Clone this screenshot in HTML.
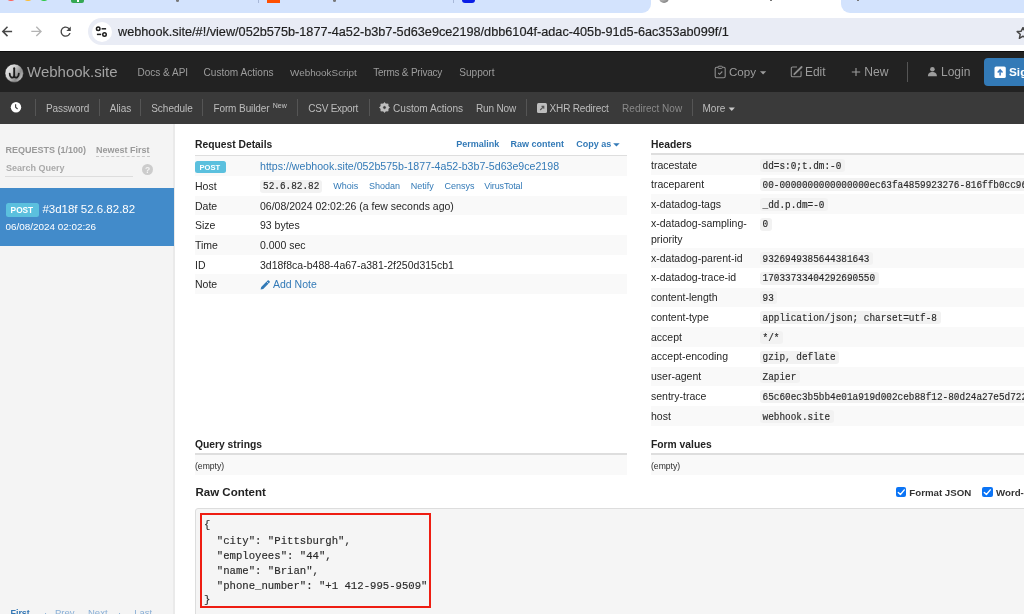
<!DOCTYPE html><html><head><meta charset="utf-8"><title>Webhook.site</title><style>
*{box-sizing:border-box;margin:0;padding:0}
html,body{width:1024px;height:614px;overflow:hidden;background:#fff;font-family:"Liberation Sans",sans-serif;position:relative;color:#333}
.a{position:absolute;white-space:nowrap}
.bx{position:absolute}
.nv{font-size:10px;color:#9d9d9d;line-height:12px}
.nr{font-size:11.6px;color:#9d9d9d;line-height:14px}
.tb{font-size:10px;color:#bdbdbd;line-height:12px}
.sep{position:absolute;width:1px;background:#555}
.lab{font-size:10.5px;color:#262626;line-height:14px}
.lnk{color:#337ab7}
.code{position:absolute;background:#f2f2f2;border-radius:3px;height:13.5px}
.ct{font-family:"Liberation Mono",monospace;font-size:9.4px;color:#2a2a2a;line-height:12px;transform:scaleY(1.18);transform-origin:0 9px;-webkit-text-stroke:0.15px #2a2a2a}
.hd{font-size:10.3px;font-weight:bold;color:#222;line-height:13px}
</style></head><body><div id="root" style="will-change:transform;position:absolute;left:0;top:0;width:1024px;height:614px;overflow:hidden">
<div class="bx" style="left:0;top:0;width:1024px;height:51px;background:#fff"></div>
<div class="bx" style="left:88px;top:17.8px;width:960px;height:27.4px;border-radius:14px;background:#e9ecf5"></div>
<div class="bx" style="left:91.5px;top:21.5px;width:20px;height:20px;border-radius:50%;background:#fff"></div>
<div class="a" style="left:118px;top:24px;font-size:12.7px;color:#1f1f1f;line-height:16px;-webkit-text-stroke:0.2px #1f1f1f">webhook.site/#!/view/052b575b-1877-4a52-b3b7-5d63e9ce2198/dbb6104f-adac-405b-91d5-6ac353ab099f/1</div>
<div class="bx" style="left:0;top:51px;width:1024px;height:41px;background:#222;border-top:1px solid #0c0c0c"></div>
<div class="a" style="left:27px;top:63.4px;font-size:15px;color:#a3a3a3;line-height:18px">Webhook.site</div>
<div class="a nv" style="left:137.5px;top:67px;font-size:10px;">Docs &amp; API</div>
<div class="a nv" style="left:203.5px;top:67px;font-size:10.1px;">Custom Actions</div>
<div class="a nv" style="left:290px;top:67px;font-size:9.9px;">WebhookScript</div>
<div class="a nv" style="left:373.2px;top:67px;font-size:10px;letter-spacing:-0.22px">Terms &amp; Privacy</div>
<div class="a nv" style="left:459.2px;top:67px;font-size:10.1px;">Support</div>
<div class="a nr" style="left:729px;top:65.00px;font-size:11.6px">Copy</div>
<div class="a nr" style="left:805px;top:64.75px;font-size:11.95px">Edit</div>
<div class="a nr" style="left:864.3px;top:64.65px;font-size:12.1px">New</div>
<div class="a nr" style="left:941px;top:64.72px;font-size:12px">Login</div>
<div class="sep" style="left:907px;top:62px;height:20px;background:#555"></div>
<div class="bx" style="left:984px;top:58px;width:60px;height:27.5px;border-radius:4px;background:#337ab7"></div>
<div class="a" style="left:1009px;top:65px;font-size:11.8px;font-weight:bold;color:#fff;line-height:14px">Sign up</div>
<div class="bx" style="left:0;top:92px;width:1024px;height:32px;background:#3a3a3a"></div>
<div class="sep" style="left:35.0px;top:99px;height:16.5px"></div>
<div class="sep" style="left:99.1px;top:99px;height:16.5px"></div>
<div class="sep" style="left:140.1px;top:99px;height:16.5px"></div>
<div class="sep" style="left:202.3px;top:99px;height:16.5px"></div>
<div class="sep" style="left:297.0px;top:99px;height:16.5px"></div>
<div class="sep" style="left:368.9px;top:99px;height:16.5px"></div>
<div class="sep" style="left:526.3px;top:99px;height:16.5px"></div>
<div class="sep" style="left:691.8px;top:99px;height:16.5px"></div>
<div class="a tb" style="left:45.9px;top:102.7px;letter-spacing:-0.08px">Password</div>
<div class="a tb" style="left:109.8px;top:102.7px;letter-spacing:-0.05px">Alias</div>
<div class="a tb" style="left:151.2px;top:102.7px;">Schedule</div>
<div class="a tb" style="left:213.4px;top:102.7px;letter-spacing:-0.09px">Form Builder</div>
<div class="a tb" style="left:308.3px;top:102.7px;letter-spacing:-0.25px">CSV Export</div>
<div class="a tb" style="left:393px;top:102.7px;font-size:10.1px">Custom Actions</div>
<div class="a tb" style="left:476px;top:102.7px;letter-spacing:-0.17px">Run Now</div>
<div class="a tb" style="left:549.6px;top:102.7px;letter-spacing:-0.18px">XHR Redirect</div>
<div class="a tb" style="left:622.1px;top:102.7px;color:#8a8a8a">Redirect Now</div>
<div class="a tb" style="left:702.5px;top:102.7px;">More</div>
<div class="a" style="left:272.7px;top:100.8px;font-size:7px;color:#c8c8c8;line-height:9px">New</div>
<div class="bx" style="left:0;top:124px;width:175px;height:490px;background:#f4f4f4;border-right:2px solid #eaeaea"></div>
<div class="a" style="left:5.5px;top:145px;font-size:9px;font-weight:bold;color:#999;line-height:10px">REQUESTS (1/100)</div>
<div class="a" style="left:96px;top:145px;font-size:9px;font-weight:bold;color:#999;line-height:10px">Newest First</div>
<div class="bx" style="left:96px;top:156px;width:54px;height:0;border-top:1px dashed #c8c8c8"></div>
<div class="a" style="left:6px;top:163px;font-size:9px;font-weight:bold;color:#aaa;line-height:10px">Search Query</div>
<div class="bx" style="left:5px;top:176px;width:128px;height:1px;background:#ddd"></div>
<div class="bx" style="left:141.8px;top:164.1px;width:11.2px;height:11.2px;border-radius:50%;background:#ccc"></div>
<div class="a" style="left:144.5px;top:165px;width:6px;text-align:center;font-size:8.5px;font-weight:bold;color:#f4f4f4;line-height:10px">?</div>
<div class="bx" style="left:0;top:188px;width:173.5px;height:57.5px;background:#428bca"></div>
<div class="bx" style="left:5.5px;top:203px;width:33.5px;height:14.3px;border-radius:2.5px;background:#5bc0de"></div>
<div class="a" style="left:10.6px;top:205px;font-size:8.3px;font-weight:bold;color:#fff;line-height:10px">POST</div>
<div class="a" style="left:42.4px;top:203px;font-size:11.5px;color:#fff;line-height:13px">#3d18f 52.6.82.82</div>
<div class="a" style="left:5.5px;top:221px;font-size:9.9px;color:#fff;line-height:11px">06/08/2024 02:02:26</div>
<div class="a" style="left:10.5px;top:607.6px;font-size:8.9px;font-weight:bold;color:#3377b5;line-height:11px">First</div>
<div class="a" style="left:44px;top:606.5px;font-size:9.5px;color:#89afd6;line-height:11px">&middot;</div>
<div class="a" style="left:55px;top:606.5px;font-size:9.5px;color:#89afd6;line-height:11px">Prev</div>
<div class="a" style="left:88px;top:606.5px;font-size:9.5px;color:#89afd6;line-height:11px">Next</div>
<div class="a" style="left:118px;top:606.5px;font-size:9.5px;color:#89afd6;line-height:11px">&middot;</div>
<div class="a" style="left:134.2px;top:606.5px;font-size:9.5px;color:#89afd6;line-height:11px">Last</div>
<div class="a hd" style="left:195px;top:138px">Request Details</div>
<div class="a lnk" style="left:456.2px;top:139px;font-size:9px;font-weight:bold;line-height:11px">Permalink</div>
<div class="a lnk" style="left:510.6px;top:139px;font-size:9px;font-weight:bold;line-height:11px">Raw content</div>
<div class="a lnk" style="left:576.2px;top:139px;font-size:9px;font-weight:bold;line-height:11px">Copy as</div>
<div class="bx" style="left:195px;top:154.5px;width:432px;height:2px;background:#dedede"></div>
<div class="bx" style="left:195px;top:156.30px;width:432px;height:19.65px;background:#f9f9f9"></div>
<div class="a lab" style="left:195px;top:178.95px">Host</div>
<div class="bx" style="left:195px;top:195.60px;width:432px;height:19.65px;background:#f9f9f9"></div>
<div class="a lab" style="left:195px;top:198.60px">Date</div>
<div class="a lab" style="left:195px;top:218.25px">Size</div>
<div class="bx" style="left:195px;top:234.90px;width:432px;height:19.65px;background:#f9f9f9"></div>
<div class="a lab" style="left:195px;top:237.90px">Time</div>
<div class="a lab" style="left:195px;top:257.55px">ID</div>
<div class="bx" style="left:195px;top:274.20px;width:432px;height:19.65px;background:#f9f9f9"></div>
<div class="a lab" style="left:195px;top:277.20px">Note</div>
<div class="bx" style="left:195px;top:161px;width:30.5px;height:12.4px;border-radius:2.5px;background:#5bc0de"></div>
<div class="a" style="left:199.5px;top:162.5px;font-size:7.6px;font-weight:bold;color:#fff;line-height:10px">POST</div>
<div class="a lab lnk" style="left:260px;top:159.20px;font-size:10.61px">https://webhook.site/052b575b-1877-4a52-b3b7-5d63e9ce2198</div>
<div class="code" style="left:260px;top:179.7px;width:62.2px"></div>
<div class="a ct" style="left:263px;top:181.2px">52.6.82.82</div>
<div class="a lnk" style="left:333.3px;top:179.95px;font-size:9px;line-height:12px">Whois</div>
<div class="a lnk" style="left:369px;top:179.95px;font-size:9px;line-height:12px">Shodan</div>
<div class="a lnk" style="left:410.7px;top:179.95px;font-size:9px;line-height:12px">Netify</div>
<div class="a lnk" style="left:444.6px;top:179.95px;font-size:9px;line-height:12px">Censys</div>
<div class="a lnk" style="left:484.3px;top:179.95px;font-size:9px;letter-spacing:-0.14px;line-height:12px">VirusTotal</div>
<div class="a lab" style="left:260px;top:198.60px">06/08/2024 02:02:26 (a few seconds ago)</div>
<div class="a lab" style="left:260px;top:218.25px">93 bytes</div>
<div class="a lab" style="left:260px;top:237.90px">0.000 sec</div>
<div class="a lab" style="left:260px;top:257.55px">3d18f8ca-b488-4a67-a381-2f250d315cb1</div>
<div class="a lab lnk" style="left:273px;top:277.20px">Add Note</div>
<div class="a hd" style="left:651px;top:138px">Headers</div>
<div class="bx" style="left:651px;top:153px;width:400px;height:2px;background:#dedede"></div>
<div class="bx" style="left:651px;top:155.00px;width:400px;height:19.65px;background:#f9f9f9"></div>
<div class="a lab" style="left:651px;top:157.50px;line-height:15.3px">tracestate</div>
<div class="code" style="left:759.5px;top:158.60px;width:85.5px;height:13px"></div>
<div class="a ct" style="left:762.6px;top:160.50px">dd=s:0;t.dm:-0</div>
<div class="a lab" style="left:651px;top:177.15px;line-height:15.3px">traceparent</div>
<div class="code" style="left:759.5px;top:178.25px;width:271.6px;height:13px"></div>
<div class="a ct" style="left:762.6px;top:180.15px">00-0000000000000000ec63fa4859923276-816ffb0cc96</div>
<div class="bx" style="left:651px;top:194.30px;width:400px;height:19.65px;background:#f9f9f9"></div>
<div class="a lab" style="left:651px;top:196.80px;line-height:15.3px">x-datadog-tags</div>
<div class="code" style="left:759.5px;top:197.90px;width:68.5px;height:13px"></div>
<div class="a ct" style="left:762.6px;top:199.80px">_dd.p.dm=-0</div>
<div class="a lab" style="left:651px;top:216.45px;line-height:15.3px">x-datadog-sampling-<br>priority</div>
<div class="code" style="left:759.5px;top:217.55px;width:12.1px;height:13px"></div>
<div class="a ct" style="left:762.6px;top:219.45px">0</div>
<div class="bx" style="left:651px;top:248.15px;width:400px;height:19.75px;background:#f9f9f9"></div>
<div class="a lab" style="left:651px;top:250.65px;line-height:15.3px">x-datadog-parent-id</div>
<div class="code" style="left:759.5px;top:251.75px;width:113.7px;height:13px"></div>
<div class="a ct" style="left:762.6px;top:253.65px">9326949385644381643</div>
<div class="a lab" style="left:651px;top:270.40px;line-height:15.3px">x-datadog-trace-id</div>
<div class="code" style="left:759.5px;top:271.50px;width:119.3px;height:13px"></div>
<div class="a ct" style="left:762.6px;top:273.40px">17033733404292690550</div>
<div class="bx" style="left:651px;top:287.65px;width:400px;height:19.75px;background:#f9f9f9"></div>
<div class="a lab" style="left:651px;top:290.15px;line-height:15.3px">content-length</div>
<div class="code" style="left:759.5px;top:291.25px;width:17.8px;height:13px"></div>
<div class="a ct" style="left:762.6px;top:293.15px">93</div>
<div class="a lab" style="left:651px;top:309.90px;line-height:15.3px">content-type</div>
<div class="code" style="left:759.5px;top:311.00px;width:181.3px;height:13px"></div>
<div class="a ct" style="left:762.6px;top:312.90px">application/json; charset=utf-8</div>
<div class="bx" style="left:651px;top:327.15px;width:400px;height:19.75px;background:#f9f9f9"></div>
<div class="a lab" style="left:651px;top:329.65px;line-height:15.3px">accept</div>
<div class="code" style="left:759.5px;top:330.75px;width:23.4px;height:13px"></div>
<div class="a ct" style="left:762.6px;top:332.65px">*/*</div>
<div class="a lab" style="left:651px;top:349.40px;line-height:15.3px">accept-encoding</div>
<div class="code" style="left:759.5px;top:350.50px;width:79.8px;height:13px"></div>
<div class="a ct" style="left:762.6px;top:352.40px">gzip, deflate</div>
<div class="bx" style="left:651px;top:366.65px;width:400px;height:19.75px;background:#f9f9f9"></div>
<div class="a lab" style="left:651px;top:369.15px;line-height:15.3px">user-agent</div>
<div class="code" style="left:759.5px;top:370.25px;width:40.3px;height:13px"></div>
<div class="a ct" style="left:762.6px;top:372.15px">Zapier</div>
<div class="a lab" style="left:651px;top:388.90px;line-height:15.3px">sentry-trace</div>
<div class="code" style="left:759.5px;top:390.00px;width:271.6px;height:13px"></div>
<div class="a ct" style="left:762.6px;top:391.90px">65c60ec3b5bb4e01a919d002ceb88f12-80d24a27e5d722</div>
<div class="bx" style="left:651px;top:406.15px;width:400px;height:19.75px;background:#f9f9f9"></div>
<div class="a lab" style="left:651px;top:408.65px;line-height:15.3px">host</div>
<div class="code" style="left:759.5px;top:409.75px;width:74.2px;height:13px"></div>
<div class="a ct" style="left:762.6px;top:411.65px">webhook.site</div>
<div class="a hd" style="left:195px;top:437.5px">Query strings</div>
<div class="bx" style="left:195px;top:453px;width:432px;height:2px;background:#dedede"></div>
<div class="bx" style="left:195px;top:455px;width:432px;height:19.6px;background:#f9f9f9"></div>
<div class="a" style="left:195px;top:460.7px;font-size:8.6px;color:#2a2a2a;line-height:11px">(empty)</div>
<div class="a hd" style="left:651px;top:437.5px">Form values</div>
<div class="bx" style="left:651px;top:453px;width:400px;height:2px;background:#dedede"></div>
<div class="bx" style="left:651px;top:455px;width:400px;height:19.6px;background:#f9f9f9"></div>
<div class="a" style="left:651px;top:460.7px;font-size:8.6px;color:#2a2a2a;line-height:11px">(empty)</div>
<div class="a" style="left:195.5px;top:484.5px;font-size:11.5px;font-weight:bold;color:#222;line-height:14px">Raw Content</div>
<div class="bx" style="left:895.5px;top:486.5px;width:10.5px;height:10.5px;border-radius:2px;background:#0b74f5"></div>
<div class="a" style="left:909.3px;top:487px;font-size:9.7px;font-weight:bold;color:#333;line-height:12px">Format JSON</div>
<div class="bx" style="left:982.4px;top:486.5px;width:10.5px;height:10.5px;border-radius:2px;background:#0b74f5"></div>
<div class="a" style="left:996px;top:487px;font-size:9.7px;font-weight:bold;color:#333;line-height:12px">Word-</div>
<div class="bx" style="left:195px;top:507.5px;width:900px;height:120px;background:#f5f5f5;border:1px solid #ddd;border-radius:3px"></div>
<div class="bx" style="left:200.2px;top:512.5px;width:231px;height:95.5px;border:2px solid #ee1d12"></div>
<div class="a" style="left:204px;top:518.30px;font-family:'Liberation Mono',monospace;font-size:10.65px;color:#2a2a2a;line-height:15px;transform:scaleY(1.1);transform-origin:0 11px;-webkit-text-stroke:0.15px #2a2a2a">{</div>
<div class="a" style="left:204px;top:533.50px;font-family:'Liberation Mono',monospace;font-size:10.65px;color:#2a2a2a;line-height:15px;transform:scaleY(1.1);transform-origin:0 11px;-webkit-text-stroke:0.15px #2a2a2a">&nbsp;&nbsp;&quot;city&quot;:&nbsp;&quot;Pittsburgh&quot;,</div>
<div class="a" style="left:204px;top:548.70px;font-family:'Liberation Mono',monospace;font-size:10.65px;color:#2a2a2a;line-height:15px;transform:scaleY(1.1);transform-origin:0 11px;-webkit-text-stroke:0.15px #2a2a2a">&nbsp;&nbsp;&quot;employees&quot;:&nbsp;&quot;44&quot;,</div>
<div class="a" style="left:204px;top:563.90px;font-family:'Liberation Mono',monospace;font-size:10.65px;color:#2a2a2a;line-height:15px;transform:scaleY(1.1);transform-origin:0 11px;-webkit-text-stroke:0.15px #2a2a2a">&nbsp;&nbsp;&quot;name&quot;:&nbsp;&quot;Brian&quot;,</div>
<div class="a" style="left:204px;top:579.10px;font-family:'Liberation Mono',monospace;font-size:10.65px;color:#2a2a2a;line-height:15px;transform:scaleY(1.1);transform-origin:0 11px;-webkit-text-stroke:0.15px #2a2a2a">&nbsp;&nbsp;&quot;phone_number&quot;:&nbsp;&quot;+1&nbsp;412-995-9509&quot;</div>
<div class="a" style="left:204px;top:593.10px;font-family:'Liberation Mono',monospace;font-size:10.65px;color:#2a2a2a;line-height:15px;transform:scaleY(1.1);transform-origin:0 11px;-webkit-text-stroke:0.15px #2a2a2a">}</div>
<div class="bx" style="left:0;top:0;width:651px;height:12.5px;background:#d3e3fd;border-bottom-right-radius:9px"></div>
<div class="bx" style="left:841px;top:0;width:183px;height:12.5px;background:#d3e3fd;border-bottom-left-radius:9px"></div>
<div class="bx" style="left:5px;top:-11px;width:12px;height:12px;border-radius:50%;background:#ff5f57"></div>
<div class="bx" style="left:21.5px;top:-11px;width:12px;height:12px;border-radius:50%;background:#febc2e"></div>
<div class="bx" style="left:38px;top:-11px;width:12px;height:12px;border-radius:50%;background:#28c840"></div>
<div class="bx" style="left:71px;top:-6px;width:13px;height:9px;border-radius:2px;background:#34a853"></div>
<div class="bx" style="left:76.5px;top:0;width:2px;height:2px;background:#fff"></div>
<div class="bx" style="left:176px;top:-1px;width:3px;height:2.5px;border-radius:50%;background:#777"></div>
<div class="bx" style="left:257.5px;top:0;width:1px;height:3px;background:#a8b8d8"></div>
<div class="bx" style="left:266.6px;top:-6px;width:13px;height:8.7px;background:#ff4f00"></div>
<div class="bx" style="left:333px;top:-1px;width:3px;height:2.5px;border-radius:50%;background:#777"></div>
<div class="bx" style="left:452.5px;top:0;width:1px;height:3px;background:#a8b8d8"></div>
<div class="bx" style="left:462px;top:-6px;width:13px;height:8.8px;border-radius:3px;background:#0a1ee6"></div>
<div class="bx" style="left:658.5px;top:-8px;width:10.5px;height:10.7px;border-radius:50%;background:radial-gradient(circle at 30% 30%,#eee,#666)"></div>
<div class="bx" style="left:770px;top:-1px;width:2px;height:2px;background:#777"></div>
<div class="bx" style="left:857px;top:-1px;width:2px;height:2px;background:#777"></div>
<svg class="bx" style="left:1016px;top:27px" width="14" height="12" viewBox="0 0 14 12"><path d="M7 0.5 L8.8 4.2 L12.8 4.6 L9.8 7.3 L10.6 11.3 L7 9.2 L3.4 11.3 L4.2 7.3 L1.2 4.6 L5.2 4.2 Z" fill="none" stroke="#474747" stroke-width="1.5" stroke-linejoin="round"/></svg>
<svg class="bx" style="left:58.4px;top:23.7px" width="16" height="16" viewBox="0 0 25 25"><path d="M17.65 6.35A7.958 7.958 0 0 0 12 4c-4.42 0-7.99 3.58-7.99 8s3.57 8 7.99 8c3.730 0 6.84-2.55 7.73-6h-2.08A5.99 5.99 0 0 1 12 18c-3.31 0-6-2.69-6-6s2.69-6 6-6c1.66 0 3.14.69 4.22 1.78L13 11h7V4l-2.35 2.35z" fill="#474747"/></svg>
<svg class="bx" style="left:0;top:24px" width="80" height="15" viewBox="0 0 80 15"><path d="M3 7.4 H12.1 M7.5 2.7 L2.8 7.4 L7.5 12.1" fill="none" stroke="#474747" stroke-width="1.5"/><path d="M31.3 7.4 H40.8 M36.3 2.7 L41 7.4 L36.3 12.1" fill="none" stroke="#b4b4b4" stroke-width="1.4"/></svg>
<svg class="bx" style="left:94px;top:24px" width="16" height="16" viewBox="0 0 16 16"><circle cx="4.2" cy="4.8" r="1.75" fill="none" stroke="#1f1f1f" stroke-width="1.5"/><path d="M7.6 4.8 H12.1" stroke="#1f1f1f" stroke-width="1.5"/><circle cx="10.5" cy="10.4" r="1.75" fill="none" stroke="#1f1f1f" stroke-width="1.5"/><path d="M2.9 10.4 H7.2" stroke="#1f1f1f" stroke-width="1.5"/></svg>
<svg class="bx" style="left:4px;top:63px" width="21" height="21" viewBox="0 0 21 21"><defs><linearGradient id="lg" x1="0" y1="0" x2="1" y2="0.6"><stop offset="0" stop-color="#f2f2f2"/><stop offset="0.45" stop-color="#d0d0d0"/><stop offset="0.8" stop-color="#8e8e8e"/><stop offset="1" stop-color="#bdbdbd"/></linearGradient></defs><circle cx="10.2" cy="10.2" r="9.2" fill="url(#lg)" stroke="#151515" stroke-width="0.5"/><path d="M10.2 5.2 V13.6" fill="none" stroke="#1c1c1c" stroke-width="1.9" stroke-linecap="round"/><path d="M5.7 10.6 C5.5 14.8 8.6 15.3 10.2 13.6 C11.8 15.3 14.9 14.8 14.8 10.6" fill="none" stroke="#1c1c1c" stroke-width="1.8" stroke-linecap="round"/></svg>
<svg class="bx" style="left:714px;top:65px" width="13" height="14" viewBox="0 0 13 14"><rect x="1.2" y="2.2" width="10" height="10.6" rx="1.5" fill="none" stroke="#8f8f8f" stroke-width="1.1"/><rect x="4" y="1.2" width="4.4" height="2.2" rx="1" fill="#222" stroke="#8f8f8f" stroke-width="1"/><path d="M4.2 8 L5.6 9.3 L8.3 6.5" fill="none" stroke="#8f8f8f" stroke-width="1.1"/></svg>
<svg class="bx" style="left:759px;top:70px" width="8" height="5" viewBox="0 0 8 5"><path d="M1 1.2 H7.2 L4.1 4.6 Z" fill="#9d9d9d"/></svg>
<svg class="bx" style="left:790px;top:65px" width="14" height="13" viewBox="0 0 14 13"><path d="M7 2 H2.6 A1.3 1.3 0 0 0 1.3 3.3 V10.5 A1.3 1.3 0 0 0 2.6 11.8 H9.8 A1.3 1.3 0 0 0 11.1 10.5 V6.2" fill="none" stroke="#8f8f8f" stroke-width="1.1"/><path d="M4.3 9.2 L11.6 2" stroke="#8f8f8f" stroke-width="1.8" stroke-linecap="round"/></svg>
<svg class="bx" style="left:851px;top:67px" width="10" height="10" viewBox="0 0 10 10"><path d="M5 0.9 V9.1 M0.8 5 H9.2" stroke="#9d9d9d" stroke-width="1.1"/></svg>
<svg class="bx" style="left:927px;top:66px" width="11" height="11" viewBox="0 0 11 11"><circle cx="5.4" cy="3.2" r="2.3" fill="#9d9d9d"/><path d="M0.9 10.3 C0.9 7 3 6 5.4 6 C7.8 6 9.9 7 9.9 10.3 Z" fill="#9d9d9d"/></svg>
<svg class="bx" style="left:994px;top:65.5px" width="12.5" height="12.5" viewBox="0 0 12.5 12.5"><rect x="0.5" y="0.5" width="11.3" height="11.5" rx="1.6" fill="#fff"/><path d="M6.1 9.6 V4.2 M3.7 6.4 L6.1 3.8 L8.5 6.4" fill="none" stroke="#3a7bbf" stroke-width="1.5"/></svg>
<svg class="bx" style="left:10px;top:100.5px" width="12" height="12" viewBox="0 0 12 12"><circle cx="6" cy="6.2" r="5.2" fill="#fff"/><path d="M5.6 3.2 V6.3 L7.6 8" fill="none" stroke="#444" stroke-width="1.2"/></svg>
<svg class="bx" style="left:379.2px;top:102px" width="11" height="11" viewBox="0 0 11 11"><path fill-rule="evenodd" d="M5.50,0.40 L6.99,1.90 L9.11,1.89 L9.10,4.01 L10.60,5.50 L9.10,6.99 L9.11,9.11 L6.99,9.10 L5.50,10.60 L4.01,9.10 L1.89,9.11 L1.90,6.99 L0.40,5.50 L1.90,4.01 L1.89,1.89 L4.01,1.90 Z M7.2 5.5 A1.7 1.7 0 1 0 3.8 5.5 A1.7 1.7 0 1 0 7.2 5.5 Z" fill="#bdbdbd" stroke="#bdbdbd" stroke-width="0.6" stroke-linejoin="round"/></svg>
<svg class="bx" style="left:537px;top:102.7px" width="10" height="10" viewBox="0 0 10 10"><rect x="0" y="0" width="10" height="10" rx="1.5" fill="#bdbdbd"/><path d="M3.2 7 L6.6 3.6 M4.5 3.4 H6.8 V5.7" fill="none" stroke="#555" stroke-width="1.1"/></svg>
<svg class="bx" style="left:727.5px;top:106.5px" width="8" height="5" viewBox="0 0 8 5"><path d="M0.6 0.6 H6.9 L3.75 4 Z" fill="#c8c8c8"/></svg>
<svg class="bx" style="left:613.3px;top:143.4px" width="8" height="5" viewBox="0 0 8 5"><path d="M0.2 0.3 H6.7 L3.45 3.6 Z" fill="#337ab7"/></svg>
<svg class="bx" style="left:259px;top:278.5px" width="12" height="12" viewBox="0 0 12 12"><path d="M1.6 10.6 L2.2 8 L8.6 1.6 A0.9 0.9 0 0 1 9.9 1.6 L10.6 2.3 A0.9 0.9 0 0 1 10.6 3.6 L4.2 10 Z" fill="#337ab7"/><path d="M7.6 2.6 L9.6 4.6" stroke="#f9f9f9" stroke-width="0.7"/></svg>
<svg class="bx" style="left:895.5px;top:486.5px" width="10.5" height="10.5" viewBox="0 0 10.5 10.5"><path d="M2.3 5.4 L4.4 7.5 L8.3 2.9" fill="none" stroke="#fff" stroke-width="1.4" stroke-linecap="round" stroke-linejoin="round"/></svg>
<svg class="bx" style="left:982.4px;top:486.5px" width="10.5" height="10.5" viewBox="0 0 10.5 10.5"><path d="M2.3 5.4 L4.4 7.5 L8.3 2.9" fill="none" stroke="#fff" stroke-width="1.4" stroke-linecap="round" stroke-linejoin="round"/></svg>
</div></body></html>
